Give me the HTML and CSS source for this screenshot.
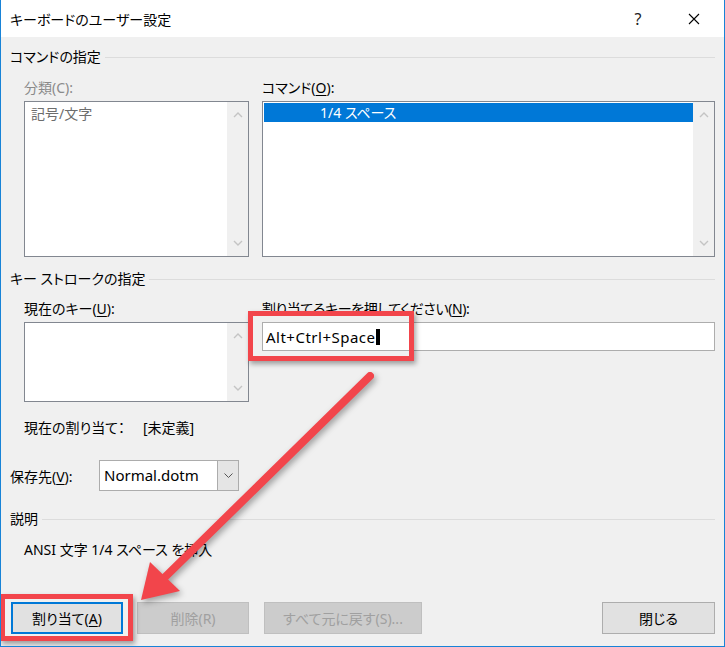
FILE: index.html
```html
<!DOCTYPE html>
<html lang="ja">
<head>
  <meta charset="UTF-8">
  <title>キーボードのユーザー設定</title>
  <link rel="stylesheet" href="styles.css">
</head>
<body>
  <div class="window">
    <div class="titlebar">
      <span class="title">キーボードのユーザー設定</span>
      <span class="tbtn help">?</span>
      <span class="tbtn close">
        <svg width="12" height="12" viewBox="0 0 12 12"><path d="M1 1L11 11M11 1L1 11" stroke="#000" stroke-width="1.1" fill="none"/></svg>
      </span>
    </div>

    <div class="content">
      <div class="section">コマンドの指定</div>
      <div class="cols first">
        <div class="col left">
          <div class="label disabled">分類(C):</div>
          <div class="listbox tall">
            <div class="items"><div class="item muted">記号/文字</div></div>
            <div class="scroll">
              <svg width="10" height="6" viewBox="0 0 10 6"><path d="M1 5L5 1L9 5" stroke="#c4c4c4" stroke-width="1.4" fill="none"/></svg>
              <svg width="10" height="6" viewBox="0 0 10 6"><path d="M1 1L5 5L9 1" stroke="#c4c4c4" stroke-width="1.4" fill="none"/></svg>
            </div>
          </div>
        </div>
        <div class="col right">
          <div class="label">コマンド(<u>O</u>):</div>
          <div class="listbox tall">
            <div class="items"><div class="item selected">1/4 スペース</div></div>
            <div class="scroll">
              <svg width="10" height="6" viewBox="0 0 10 6"><path d="M1 5L5 1L9 5" stroke="#c4c4c4" stroke-width="1.4" fill="none"/></svg>
              <svg width="10" height="6" viewBox="0 0 10 6"><path d="M1 1L5 5L9 1" stroke="#c4c4c4" stroke-width="1.4" fill="none"/></svg>
            </div>
          </div>
        </div>
      </div>

      <div class="section sec2">キー ストロークの指定</div>
      <div class="cols second">
        <div class="col left">
          <div class="label">現在のキー(<u>U</u>):</div>
          <div class="listbox short">
            <div class="items"></div>
            <div class="scroll">
              <svg width="10" height="6" viewBox="0 0 10 6"><path d="M1 5L5 1L9 5" stroke="#c4c4c4" stroke-width="1.4" fill="none"/></svg>
              <svg width="10" height="6" viewBox="0 0 10 6"><path d="M1 1L5 5L9 1" stroke="#c4c4c4" stroke-width="1.4" fill="none"/></svg>
            </div>
          </div>
        </div>
        <div class="col right">
          <div class="label tight">割り当てるキーを押してください(<u>N</u>):</div>
          <div class="input">Alt+Ctrl+Space<span class="caret"></span></div>
        </div>
      </div>

      <div class="assign"><span class="assign-label">現在の割り当て：</span><span>[未定義]</span></div>

      <div class="save">
        <span>保存先(<u>V</u>):</span>
        <div class="combo">
          <span class="combo-value">Normal.dotm</span>
          <span class="combo-btn">
            <svg width="9" height="5" viewBox="0 0 9 5"><path d="M0.5 0.5L4.5 4.5L8.5 0.5" stroke="#555" stroke-width="1" fill="none"/></svg>
          </span>
        </div>
      </div>

      <div class="section sec3">説明</div>
      <div class="desc">ANSI 文字 1/4 スペース を挿入</div>

      <div class="buttons">
        <button class="btn default">割り当て(<u>A</u>)</button>
        <button class="btn off del">削除(R)</button>
        <button class="btn off reset">すべて元に戻す(S)...</button>
        <button class="btn closebtn">閉じる</button>
      </div>
    </div>

    <div class="mark mark-input"></div>
    <div class="mark mark-button"></div>
    <svg class="arrow" width="725" height="647" viewBox="0 0 725 647">
      <line x1="370" y1="376" x2="160" y2="582" stroke="#f2454b" stroke-width="8" stroke-linecap="round"/>
      <polygon points="141,600 150,562 180,591" fill="#f2454b"/>
    </svg>
  </div>
</body>
</html>
```

FILE: styles.css
```css
body {
  margin: 0;
  font-family: "Noto Sans", "Noto Sans CJK JP", sans-serif;
  font-size: 14px;
  font-feature-settings: "palt";
  color: #000;
}
u {
  text-underline-offset: 2px;
}
.window {
  position: relative;
  width: 725px;
  height: 647px;
  box-sizing: border-box;
  border: 1px solid #1883d7;
  border-top: none;
  background: #f0f0f0;
  display: flex;
  flex-direction: column;
  overflow: hidden;
}
.titlebar {
  height: 37px;
  background: #fff;
  display: flex;
  align-items: center;
  padding: 0 7px 0 9px;
  flex-shrink: 0;
}
.title {
  flex: 1;
}
.tbtn {
  width: 46px;
  height: 37px;
  display: flex;
  align-items: center;
  justify-content: center;
}
.help {
  font-size: 16px;
  color: #222;
  margin-right: 10px;
}
.content {
  flex: 1;
  display: flex;
  flex-direction: column;
  padding: 10px 9px 12px 9px;
}
.section {
  display: flex;
  align-items: center;
  height: 20px;
  line-height: 20px;
}
.section::after {
  content: "";
  flex: 1;
  height: 1px;
  background: #dcdcdc;
  margin-left: 4px;
}
.cols {
  display: flex;
  gap: 13px;
  padding-left: 14px;
}
.cols.first {
  margin-top: 11px;
}
.cols.second {
  margin-top: 10px;
}
.col.left {
  width: 225px;
}
.col.right {
  flex: 1;
}
.label {
  height: 20px;
  line-height: 20px;
  margin-bottom: 3px;
}
.label.tight {
  letter-spacing: -0.4px;
}
.disabled {
  color: #8a8a8a;
}
.listbox {
  box-sizing: border-box;
  border: 1px solid #828790;
  background: #fff;
  display: flex;
}
.listbox.tall {
  height: 156px;
}
.listbox.short {
  height: 80px;
}
.items {
  flex: 1;
  padding: 1px 0 0 1px;
}
.item {
  height: 19px;
  line-height: 19px;
}
.item.muted {
  color: #6d6d6d;
  padding-left: 5px;
  margin-top: 1px;
}
.item.selected {
  background: #0078d7;
  color: #fff;
  padding-left: 56px;
}
.scroll {
  width: 21px;
  background: #f0f0f0;
  display: flex;
  flex-direction: column;
  justify-content: space-between;
  align-items: center;
  padding: 10px 0;
}
.input {
  box-sizing: border-box;
  height: 29px;
  border: 1px solid #adadad;
  background: #fff;
  padding-left: 3px;
  display: flex;
  align-items: center;
  font-size: 15px;
  letter-spacing: 0.5px;
}
.caret {
  display: inline-block;
  width: 4px;
  height: 16px;
  background: #000;
}
.assign {
  margin-top: 16px;
  padding-left: 14px;
  height: 20px;
  line-height: 20px;
  display: flex;
}
.assign-label {
  width: 119px;
}
.save {
  margin-top: 22px;
  display: flex;
  align-items: center;
}
.save > span {
  width: 89px;
}
.combo {
  box-sizing: border-box;
  width: 140px;
  height: 31px;
  border: 1px solid #acacac;
  background: #fff;
  display: flex;
}
.combo-value {
  flex: 1;
  padding-left: 4px;
  line-height: 29px;
  font-size: 15px;
}
.combo-btn {
  width: 20px;
  background: #e5e5e5;
  border-left: 1px solid #acacac;
  display: flex;
  align-items: center;
  justify-content: center;
}
.section.sec2 {
  margin-top: 12px;
}
.section.sec3 {
  margin-top: 18px;
}
.desc {
  margin-top: 11px;
  padding-left: 14px;
  height: 20px;
  line-height: 20px;
}
.buttons {
  margin-top: auto;
  display: flex;
  padding-left: 1px;
}
.btn {
  box-sizing: border-box;
  height: 32px;
  font: inherit;
  background: #e1e1e1;
  border: 1px solid #adadad;
  color: #000;
  padding: 0;
}
.btn.default {
  width: 112px;
  border: 2px solid #0078d7;
}
.btn.off {
  background: #cccccc;
  border-color: #bfbfbf;
  color: #a0a0a0;
}
.btn.del {
  width: 112px;
  margin-left: 14px;
}
.btn.reset {
  width: 158px;
  margin-left: 15px;
}
.btn.closebtn {
  width: 113px;
  margin-left: auto;
}
.mark {
  position: absolute;
  box-sizing: border-box;
  border: 5px solid #f2454b;
  box-shadow: 2px 3px 5px rgba(0, 0, 0, 0.35);
}
.mark-input {
  left: 247px;
  top: 311px;
  width: 166px;
  height: 50px;
}
.mark-button {
  left: -1px;
  top: 594px;
  width: 133px;
  height: 47px;
}
.arrow {
  position: absolute;
  left: -1px;
  top: 0;
  pointer-events: none;
  filter: drop-shadow(2px 3px 3px rgba(0, 0, 0, 0.35));
}
```
